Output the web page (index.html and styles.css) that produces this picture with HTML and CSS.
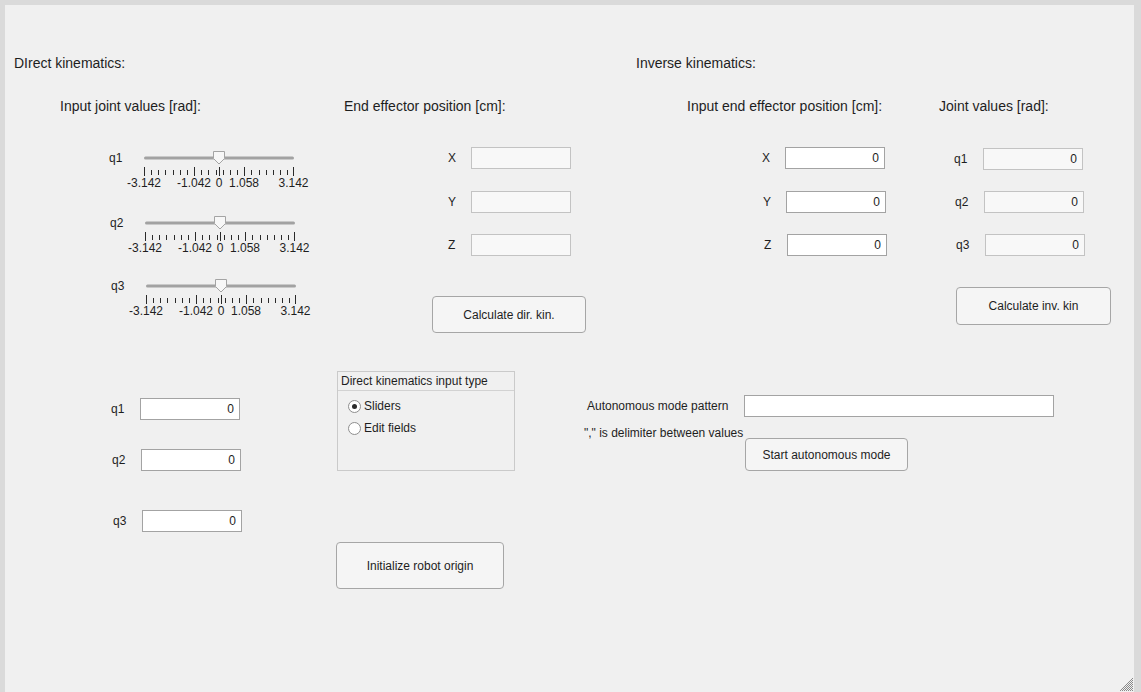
FILE: index.html
```html
<!DOCTYPE html>
<html lang="en">
<head>
<meta charset="utf-8">
<title>Robot kinematics</title>
<link rel="stylesheet" href="styles.css">
</head>
<body>
<div class="window">
  <section class="direct">
    <h1 class="title">DIrect kinematics:</h1>
    <div class="direct-top">
      <div class="joints">
        <h2 class="heading">Input joint values [rad]:</h2>
        <div class="slider-row s1">
          <span class="slider-label">q1</span>
          <svg class="slider" width="190" height="40" viewBox="0 0 190 40">
            <rect class="track" x="20" y="6.5" width="150" height="3" rx="1.5"/>
            <path class="tick-major" d="M20.5 17V26M70.5 17V26M95.5 17V26M120.5 17V26M169.5 17V26"/>
            <path class="tick-minor" d="M27.5 20V25M34.5 20V25M41.5 20V25M49.5 20V25M56.5 20V25M63.5 20V25M77.5 20V25M84.5 20V25M92.5 20V25M99.5 20V25M106.5 20V25M113.5 20V25M127.5 20V25M135.5 20V25M142.5 20V25M149.5 20V25M156.5 20V25M163.5 20V25"/>
            <polygon class="thumb" points="89.5,1.5 100.5,1.5 100.5,8.5 95,14 89.5,8.5"/>
            <text class="tick-text" x="20" y="37">-3.142</text>
            <text class="tick-text" x="70" y="37">-1.042</text>
            <text class="tick-text" x="95" y="37">0</text>
            <text class="tick-text" x="120" y="37">1.058</text>
            <text class="tick-text" x="169.5" y="37">3.142</text>
          </svg>
        </div>
        <div class="slider-row s2">
          <span class="slider-label">q2</span>
          <svg class="slider" width="190" height="40" viewBox="0 0 190 40">
            <rect class="track" x="20" y="6.5" width="150" height="3" rx="1.5"/>
            <path class="tick-major" d="M20.5 17V26M70.5 17V26M95.5 17V26M120.5 17V26M169.5 17V26"/>
            <path class="tick-minor" d="M27.5 20V25M34.5 20V25M41.5 20V25M49.5 20V25M56.5 20V25M63.5 20V25M77.5 20V25M84.5 20V25M92.5 20V25M99.5 20V25M106.5 20V25M113.5 20V25M127.5 20V25M135.5 20V25M142.5 20V25M149.5 20V25M156.5 20V25M163.5 20V25"/>
            <polygon class="thumb" points="89.5,1.5 100.5,1.5 100.5,8.5 95,14 89.5,8.5"/>
            <text class="tick-text" x="20" y="37">-3.142</text>
            <text class="tick-text" x="70" y="37">-1.042</text>
            <text class="tick-text" x="95" y="37">0</text>
            <text class="tick-text" x="120" y="37">1.058</text>
            <text class="tick-text" x="169.5" y="37">3.142</text>
          </svg>
        </div>
        <div class="slider-row s3">
          <span class="slider-label">q3</span>
          <svg class="slider" width="190" height="40" viewBox="0 0 190 40">
            <rect class="track" x="20" y="6.5" width="150" height="3" rx="1.5"/>
            <path class="tick-major" d="M20.5 17V26M70.5 17V26M95.5 17V26M120.5 17V26M169.5 17V26"/>
            <path class="tick-minor" d="M27.5 20V25M34.5 20V25M41.5 20V25M49.5 20V25M56.5 20V25M63.5 20V25M77.5 20V25M84.5 20V25M92.5 20V25M99.5 20V25M106.5 20V25M113.5 20V25M127.5 20V25M135.5 20V25M142.5 20V25M149.5 20V25M156.5 20V25M163.5 20V25"/>
            <polygon class="thumb" points="89.5,1.5 100.5,1.5 100.5,8.5 95,14 89.5,8.5"/>
            <text class="tick-text" x="20" y="37">-3.142</text>
            <text class="tick-text" x="70" y="37">-1.042</text>
            <text class="tick-text" x="95" y="37">0</text>
            <text class="tick-text" x="120" y="37">1.058</text>
            <text class="tick-text" x="169.5" y="37">3.142</text>
          </svg>
        </div>
      </div>
      <div class="effector">
        <h2 class="heading">End effector position [cm]:</h2>
        <div class="field-row f1"><span class="field-label lbl-x">X</span><input class="field readonly" type="text" readonly></div>
        <div class="field-row f2"><span class="field-label lbl-x">Y</span><input class="field readonly" type="text" readonly></div>
        <div class="field-row f3"><span class="field-label lbl-x">Z</span><input class="field readonly" type="text" readonly></div>
        <button class="btn btn-dir" type="button">Calculate dir. kin.</button>
      </div>
    </div>
    <div class="direct-bottom">
      <div class="edit-col">
        <div class="field-row e1"><span class="field-label lbl-q">q1</span><input class="field" type="text" value="0"></div>
        <div class="field-row e2"><span class="field-label lbl-q">q2</span><input class="field" type="text" value="0"></div>
        <div class="field-row e3"><span class="field-label lbl-q">q3</span><input class="field" type="text" value="0"></div>
      </div>
      <div class="panel-col">
        <div class="panel">
          <div class="panel-title">Direct kinematics input type</div>
          <div class="radio-row">
            <span class="radio checked"></span><span class="radio-text">Sliders</span>
          </div>
          <div class="radio-row">
            <span class="radio"></span><span class="radio-text">Edit fields</span>
          </div>
        </div>
        <button class="btn btn-init" type="button">Initialize robot origin</button>
      </div>
    </div>
  </section>

  <section class="inverse">
    <h1 class="title">Inverse kinematics:</h1>
    <div class="inv-top">
      <div class="target">
        <h2 class="heading">Input end effector position [cm]:</h2>
        <div class="field-row c1"><span class="field-label lbl-x">X</span><input class="field" type="text" value="0"></div>
        <div class="field-row c2"><span class="field-label lbl-x">Y</span><input class="field" type="text" value="0"></div>
        <div class="field-row c3"><span class="field-label lbl-x">Z</span><input class="field" type="text" value="0"></div>
      </div>
      <div class="jvalues">
        <h2 class="heading">Joint values [rad]:</h2>
        <div class="field-row d1"><span class="field-label lbl-q">q1</span><input class="field readonly" type="text" value="0" readonly></div>
        <div class="field-row d2"><span class="field-label lbl-q">q2</span><input class="field readonly" type="text" value="0" readonly></div>
        <div class="field-row d3"><span class="field-label lbl-q">q3</span><input class="field readonly" type="text" value="0" readonly></div>
        <button class="btn btn-inv" type="button">Calculate inv. kin</button>
      </div>
    </div>
    <div class="auto">
      <div class="auto-row">
        <span class="auto-label">Autonomous mode pattern</span>
        <input class="field auto-field" type="text">
      </div>
      <div class="auto-row2">
        <span class="delim">"," is delimiter between values</span>
        <button class="btn btn-auto" type="button">Start autonomous mode</button>
      </div>
    </div>
  </section>

  <svg class="grip" width="14" height="14" viewBox="0 0 14 14">
    <defs>
      <pattern id="gripdots" width="2" height="2" patternUnits="userSpaceOnUse">
        <rect x="0" y="0" width="1" height="1" fill="#8a8a8a"/>
        <rect x="1" y="1" width="1" height="1" fill="#8a8a8a"/>
      </pattern>
    </defs>
    <polygon points="14,0 14,14 0,14" fill="url(#gripdots)"/>
  </svg>
</div>
</body>
</html>
```

FILE: styles.css
```css
* { box-sizing: border-box; }

html, body { margin: 0; }

body {
  padding: 5px 0 0 5px;
  width: 1141px;
  height: 692px;
  overflow: hidden;
  background: #dadada;
  font-family: "Liberation Sans", Arial, sans-serif;
  font-size: 12px;
  color: #1e1e1e;
}

.window {
  position: relative;
  width: 1129px;
  height: 687px;
  background: #f0f0f0;
  display: flex;
  align-items: flex-start;
}

.direct {
  flex: none;
  width: 579px;
  display: flex;
  flex-direction: column;
  align-items: flex-start;
}

.inverse {
  flex: 1;
  display: flex;
  flex-direction: column;
  align-items: flex-start;
}

.title {
  margin: 50px 0 0 9px;
  font-size: 14px;
  line-height: 16px;
  font-weight: normal;
  white-space: nowrap;
}

.inverse .title { margin-left: 52px; }

.heading {
  margin: 0;
  font-size: 14px;
  line-height: 16px;
  font-weight: normal;
  white-space: nowrap;
}

/* ---------- direct kinematics ---------- */
.direct-top {
  display: flex;
  align-items: flex-start;
  margin-top: 27px;
}

.joints {
  margin-left: 55px;
  width: 284px;
  display: flex;
  flex-direction: column;
  align-items: flex-start;
}

.slider-row {
  display: flex;
  align-items: flex-start;
}

.slider-label {
  width: 15px;
  line-height: 14px;
  margin-top: 1px;
}

.slider { display: block; overflow: visible; }

.s1 { margin: 36px 0 0 49px; }
.s2 { margin: 25px 0 0 50px; }
.s3 { margin: 23px 0 0 51px; }

.track { fill: #a2a2a2; }
.thumb { fill: #f7f7f7; stroke: #a4a4a4; stroke-width: 1; }
.tick-major, .tick-minor { stroke: #2a2a2a; stroke-width: 1; fill: none; }
.tick-text {
  font-family: "Liberation Sans", Arial, sans-serif;
  font-size: 12px;
  fill: #1e1e1e;
  text-anchor: middle;
}

.effector {
  display: flex;
  flex-direction: column;
  align-items: flex-start;
}

.field-row {
  display: flex;
  align-items: center;
  height: 22px;
}

.field-label {
  flex: none;
  line-height: 14px;
  white-space: nowrap;
}

.lbl-x { width: 23px; }
.lbl-q { width: 29px; }

.f1 { margin: 33px 0 0 104px; }
.f2 { margin: 22px 0 0 104px; }
.f3 { margin: 21px 0 0 104px; }

.field {
  flex: none;
  width: 100px;
  height: 22px;
  margin: 0;
  padding: 0 5px;
  border: 1px solid #a3a3a3;
  border-radius: 0;
  background: #ffffff;
  font-family: "Liberation Sans", Arial, sans-serif;
  font-size: 12px;
  color: #1e1e1e;
  text-align: right;
  outline: none;
}

.field.readonly {
  background: #f8f8f8;
  border-color: #c3c3c3;
}

.btn {
  display: flex;
  align-items: center;
  justify-content: center;
  flex: none;
  margin: 0;
  padding: 0;
  background: #f5f5f5;
  border: 1px solid #a6a6a6;
  border-radius: 4px;
  font-family: "Liberation Sans", Arial, sans-serif;
  font-size: 12px;
  line-height: 14px;
  color: #1e1e1e;
}

.btn-dir {
  margin: 40px 0 0 88px;
  width: 154px;
  height: 37px;
}

.direct-bottom {
  display: flex;
  align-items: flex-start;
  margin-top: 38px;
}

.edit-col {
  margin-left: 106px;
  width: 225px;
  display: flex;
  flex-direction: column;
  align-items: flex-start;
}

.e1 { margin: 27px 0 0 0; }
.e2 { margin: 29px 0 0 1px; }
.e3 { margin: 39px 0 0 2px; }

.panel-col {
  display: flex;
  flex-direction: column;
  align-items: flex-start;
}

.panel {
  margin-left: 1px;
  width: 178px;
  height: 100px;
  border: 1px solid #cacaca;
  display: flex;
  flex-direction: column;
}

.panel-title {
  height: 19px;
  line-height: 18px;
  padding-left: 3px;
  border-bottom: 1px solid #d2d2d2;
  white-space: nowrap;
}

.radio-row {
  display: flex;
  align-items: center;
  height: 14px;
  margin: 8px 0 0 10px;
}

.radio {
  position: relative;
  flex: none;
  width: 13px;
  height: 13px;
  margin-right: 3px;
  border: 1px solid #8e8e8e;
  border-radius: 50%;
  background: #ffffff;
}

.radio.checked::after {
  content: "";
  position: absolute;
  left: 3px;
  top: 3px;
  width: 5px;
  height: 5px;
  border-radius: 50%;
  background: #2a2a2a;
}

.radio-text { line-height: 14px; }

.btn-init {
  margin-top: 71px;
  width: 168px;
  height: 47px;
}

/* ---------- inverse kinematics ---------- */
.inv-top {
  display: flex;
  align-items: flex-start;
  margin-top: 27px;
}

.target {
  margin-left: 103px;
  width: 252px;
  display: flex;
  flex-direction: column;
  align-items: flex-start;
}

.c1 { margin: 33px 0 0 75px; }
.c2 { margin: 22px 0 0 76px; }
.c3 { margin: 21px 0 0 77px; }

.jvalues {
  display: flex;
  flex-direction: column;
  align-items: flex-start;
}

.d1 { margin: 34px 0 0 15px; }
.d2 { margin: 21px 0 0 16px; }
.d3 { margin: 21px 0 0 17px; }

.btn-inv {
  margin: 31px 0 0 17px;
  width: 155px;
  height: 38px;
}

.auto {
  margin-top: 70px;
  display: flex;
  flex-direction: column;
  align-items: flex-start;
}

.auto-row {
  display: flex;
  align-items: center;
}

.auto-label {
  margin-left: 3px;
  width: 157px;
  line-height: 14px;
  white-space: nowrap;
}

.auto-field {
  width: 310px;
  text-align: left;
}

.auto-row2 {
  display: flex;
  align-items: flex-start;
  margin-top: 9px;
}

.delim {
  width: 161px;
  line-height: 14px;
  white-space: nowrap;
}

.btn-auto {
  margin-top: 12px;
  width: 163px;
  height: 33px;
}

/* resize grip overlays the window corner */
.grip {
  position: absolute;
  right: 1px;
  bottom: 1px;
  display: block;
}
```
